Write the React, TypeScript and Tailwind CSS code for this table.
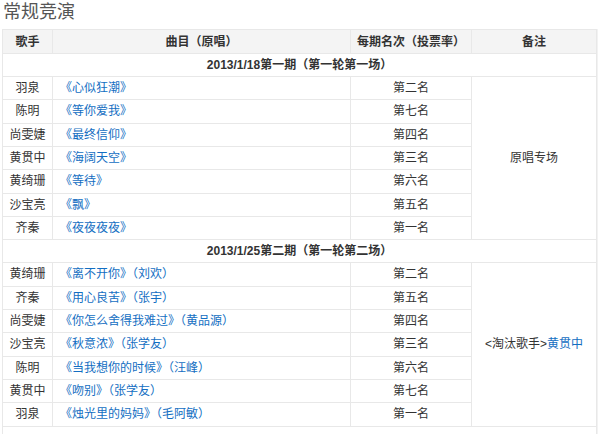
const ROUND1 = [
  { singer: '羽泉', song: '心似狂潮', orig: '', rank: '第二名' },
  { singer: '陈明', song: '等你爱我', orig: '', rank: '第七名' },
  { singer: '尚雯婕', song: '最终信仰', orig: '', rank: '第四名' },
  { singer: '黄贯中', song: '海阔天空', orig: '', rank: '第三名' },
  { singer: '黄绮珊', song: '等待', orig: '', rank: '第六名' },
  { singer: '沙宝亮', song: '飘', orig: '', rank: '第五名' },
  { singer: '齐秦', song: '夜夜夜夜', orig: '', rank: '第一名' },
]

const ROUND2 = [
  { singer: '黄绮珊', song: '离不开你', orig: '刘欢', rank: '第二名' },
  { singer: '齐秦', song: '用心良苦', orig: '张宇', rank: '第五名' },
  { singer: '尚雯婕', song: '你怎么舍得我难过', orig: '黄品源', rank: '第四名' },
  { singer: '沙宝亮', song: '秋意浓', orig: '张学友', rank: '第三名' },
  { singer: '陈明', song: '当我想你的时候', orig: '汪峰', rank: '第六名' },
  { singer: '黄贯中', song: '吻别', orig: '张学友', rank: '第七名' },
  { singer: '羽泉', song: '烛光里的妈妈', orig: '毛阿敏', rank: '第一名' },
]

type Row = (typeof ROUND1)[number]

const cell = 'border border-[#e8e8e8] h-[23.33px] p-0'

function Rows({ rows, note }: { rows: Row[]; note: React.ReactNode }) {
  return (
    <>
      {rows.map((r, i) => (
        <tr key={r.singer + i}>
          <td className={`${cell} text-center`}>{r.singer}</td>
          <td className={`${cell} pl-[7px] text-[#136ec2]`}>
            《{r.song}》{r.orig ? `（${r.orig}）` : null}
          </td>
          <td className={`${cell} text-center`}>{r.rank}</td>
          {i === 0 ? (
            <td rowSpan={rows.length} className={`${cell} text-center align-middle`}>
              {note}
            </td>
          ) : null}
        </tr>
      ))}
    </>
  )
}

function Section({ label }: { label: string }) {
  return (
    <tr>
      <td colSpan={4} className={`${cell} h-[23px] text-center font-bold`}>
        {label}
      </td>
    </tr>
  )
}

export default function App() {
  return (
    <div
      className="h-[434px] w-[600px] overflow-hidden bg-white text-[12px] text-[#333]"
      style={{ fontFamily: '"Liberation Sans", "Noto Sans CJK SC", sans-serif' }}
    >
      <h2 className="pl-[3px] pt-[1px] text-[18px] leading-[22px] text-[#555]">常规竞演</h2>
      <div className="mt-[6px] w-[598px] border-r border-[#f2f2f2] pl-[2px]">
        <table className="w-[594px] table-fixed border-collapse">
          <colgroup>
            <col className="w-[50px]" />
            <col className="w-[298px]" />
            <col className="w-[121px]" />
            <col className="w-[125px]" />
          </colgroup>
          <thead>
            <tr className="bg-[#f4f4f4]">
              <th className={`${cell} h-[24px] font-bold`}>歌手</th>
              <th className={`${cell} font-bold`}>曲目（原唱）</th>
              <th className={`${cell} font-bold`}>每期名次（投票率）</th>
              <th className={`${cell} font-bold`}>备注</th>
            </tr>
          </thead>
          <tbody>
            <Section label="2013/1/18第一期（第一轮第一场）" />
            <Rows rows={ROUND1} note="原唱专场" />
            <Section label="2013/1/25第二期（第一轮第二场）" />
            <Rows
              rows={ROUND2}
              note={
                <>
                  &lt;淘汰歌手&gt;<span className="text-[#136ec2]">黄贯中</span>
                </>
              }
            />
            <Section label="" />
          </tbody>
        </table>
      </div>
    </div>
  )
}
